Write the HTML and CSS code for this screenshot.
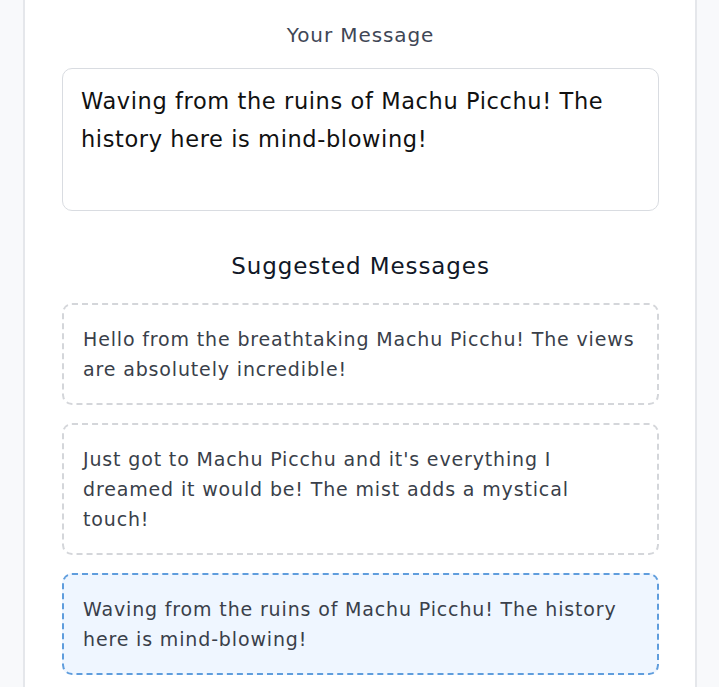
FILE: index.html
```html
<!DOCTYPE html>
<html lang="en">
<head>
<meta charset="utf-8">
<title>Messages</title>
<link rel="stylesheet" href="styles.css">
</head>
<body>
<main class="panel">
  <section class="compose">
    <label class="compose-label" for="msg">Your Message</label>
    <div class="compose-box" id="msg">Waving from the ruins of Machu Picchu! The history here is mind-blowing!</div>
  </section>
  <section class="suggestions">
    <h2 class="suggestions-title">Suggested Messages</h2>
    <div class="suggestion">Hello from the breathtaking Machu Picchu! The views are absolutely incredible!</div>
    <div class="suggestion">Just got to Machu Picchu and it's everything I dreamed it would be! The mist adds a mystical touch!</div>
    <div class="suggestion suggestion-selected">Waving from the ruins of Machu Picchu! The history here is mind-blowing!</div>
  </section>
</main>
</body>
</html>
```

FILE: styles.css
```css
* { box-sizing: border-box; }
html, body { margin: 0; padding: 0; }
body {
  background: #f8f9fb;
  font-family: "DejaVu Sans", "Open Sans", sans-serif;
  height: 687px;
  overflow: hidden;
}
.panel {
  margin: 0 22px 0 23px;
  background: #ffffff;
  border-left: 2px solid #e5e7eb;
  border-right: 2px solid #e5e7eb;
  padding: 21px 36px 40px 37px;
  min-height: 687px;
}
.compose {
  display: flex;
  flex-direction: column;
  align-items: center;
}
.compose-label {
  font-size: 20px;
  line-height: 28px;
  letter-spacing: 0.9px;
  color: #3f4756;
  margin-bottom: 19px;
}
.compose-box {
  width: 100%;
  height: 143px;
  border: 1px solid #d9dce1;
  border-radius: 10px;
  padding: 13px 10px 13px 18px;
  font-size: 22.5px;
  line-height: 38px;
  letter-spacing: 0.6px;
  color: #111111;
}
.suggestions {
  display: flex;
  flex-direction: column;
  gap: 18px;
  margin-top: 39px;
}
.suggestions-title {
  margin: 0 0 3px;
  text-align: center;
  font-size: 23px;
  line-height: 32px;
  font-weight: 500;
  letter-spacing: 0.9px;
  color: #111827;
}
.suggestion {
  border: 2px dashed #d4d6da;
  border-radius: 10px;
  padding: 19px 20px 19px 19px;
  font-size: 19px;
  line-height: 30px;
  letter-spacing: 0.85px;
  color: #3a3f4a;
  background: #ffffff;
}
.suggestion-selected {
  border-color: #5f9ddd;
  background: #eff6ff;
}
```
